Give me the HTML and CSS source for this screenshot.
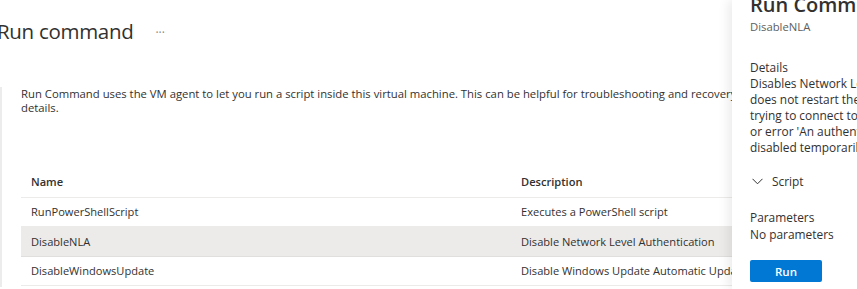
FILE: index.html
```html
<!DOCTYPE html>
<html>
<head>
<meta charset="utf-8">
<link rel="stylesheet" href="styles.css">
</head>
<body>
<div class="page">
  <header class="head">
    <h1 class="title">Run command</h1>
    <span class="more">···</span>
  </header>
  <div class="content">
    <p class="intro">Run Command uses the VM agent to let you run a script inside this virtual machine. This can be helpful for troubleshooting and recovery. Learn more about<br>details.</p>
    <table class="grid">
      <thead>
        <tr><th class="c-name">Name</th><th>Description</th></tr>
      </thead>
      <tbody>
        <tr><td>RunPowerShellScript</td><td>Executes a PowerShell script</td></tr>
        <tr class="sel"><td>DisableNLA</td><td>Disable Network Level Authentication</td></tr>
        <tr><td>DisableWindowsUpdate</td><td>Disable Windows Update Automatic Updates</td></tr>
      </tbody>
    </table>
  </div>
  <aside class="panel">
    <h2 class="p-title">Run Command Script</h2>
    <div class="p-sub">DisableNLA</div>
    <div class="p-label">Details</div>
    <p class="p-text">Disables Network Level Authentication (NLA). This script<br>does not restart the VM. Use it if you get an error when<br>trying to connect to the VM, such as 'The remote computer<br>or error 'An authentication error has occurred'. NLA is<br>disabled temporarily until the VM is restarted.</p>
    <div class="p-toggle"><svg class="chev" width="11" height="7" viewBox="0 0 11 7"><path d="M0.5 0.8 L5.5 5.8 L10.5 0.8" fill="none" stroke="#323130" stroke-width="1"/></svg><span>Script</span></div>
    <div class="p-label p-params">Parameters</div>
    <div class="p-none">No parameters</div>
    <button class="run">Run</button>
  </aside>
</div>
</body>
</html>
```
FILE: styles.css
```css
* { box-sizing: border-box; }
html, body { margin: 0; padding: 0; background: #fff; }
body {
  width: 857px;
  height: 289px;
  overflow: hidden;
  font-family: "Open Sans", "Noto Sans", sans-serif;
  color: #323130;
}
.page { position: relative; width: 857px; height: 289px; overflow: hidden; }
.head {
  display: flex;
  align-items: center;
  height: 62px;
}
.title {
  margin: 0 0 0 -3px;
  font-size: 20.5px;
  font-weight: 400;
  line-height: 30px;
  color: #323130;
  letter-spacing: -0.3px;
}
.more {
  margin-left: 22px;
  color: #8a8886;
  font-size: 12px;
  padding-top: 2px;
}
.content {
  border-left: 2px solid #ececec;
  margin-top: 40px;
  padding: 0 0 0 19px;
  height: 200px;
}
.intro {
  margin: -15px 0 0 0;
  font-size: 11.3px;
  line-height: 14px;
  white-space: nowrap;
  color: #323130;
}
.grid {
  margin-top: 52px;
  border-collapse: collapse;
  width: 760px;
  font-size: 11.1px;
}
.grid th, .grid td {
  text-align: left;
  padding: 0 10px;
  height: 29.5px;
  border-bottom: 1px solid #edebe9;
  white-space: nowrap;
  font-weight: 400;
}
.grid th { font-weight: 600; height: 30px; padding-bottom: 1px; }
.grid .c-name { width: 490px; }
.grid tr.sel td { background: #edebe9; border-bottom-color: #e1dfdd; }
.panel {
  position: absolute;
  top: 0;
  left: 732px;
  width: 400px;
  height: 289px;
  background: #fff;
  box-shadow: -4px 0 10px rgba(0,0,0,0.08);
  padding: 0 0 0 18px;
}
.p-title {
  margin: -8px 0 0 0;
  font-size: 20px;
  font-weight: 600;
  line-height: 26px;
  color: #323130;
  white-space: nowrap;
}
.p-sub {
  margin-top: 1px;
  font-size: 11.3px;
  line-height: 16px;
  color: #605e5c;
}
.p-label {
  margin-top: 24px;
  font-size: 11.9px;
  line-height: 16px;
}
.p-text {
  margin: 0;
  font-size: 11.9px;
  line-height: 16px;
  white-space: nowrap;
}
.p-toggle {
  display: flex;
  align-items: center;
  margin-top: 18px;
  padding-left: 2px;
  font-size: 11.9px;
  line-height: 16px;
}
.chev { margin-right: 9px; }
.p-params { margin-top: 20px; }
.p-none { font-size: 11.9px; line-height: 16px; margin-top: 1px; }
.run {
  display: block;
  margin-top: 18px;
  width: 72px;
  height: 22px;
  border: none;
  border-radius: 2px;
  background: #0078d4;
  color: #fff;
  font-family: "Open Sans", "Noto Sans", sans-serif;
  font-size: 11.5px;
  font-weight: 600;
  padding: 0;
}
```
